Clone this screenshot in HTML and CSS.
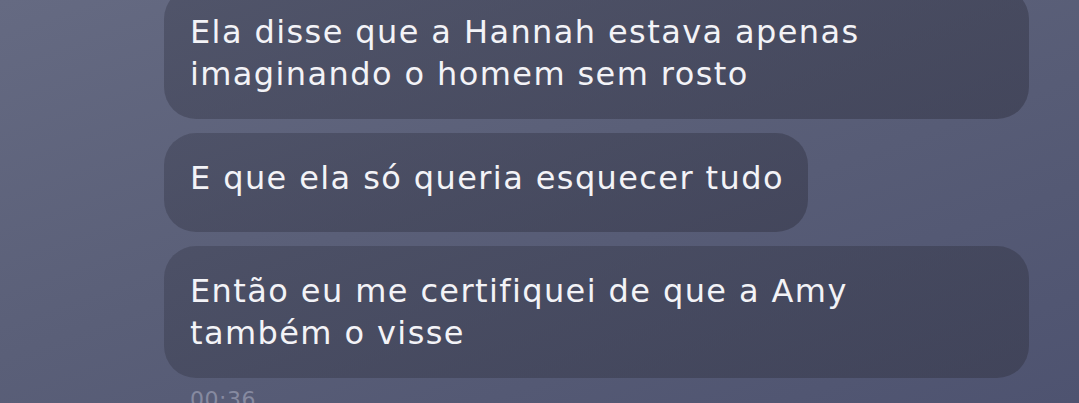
FILE: index.html
```html
<!DOCTYPE html>
<html lang="en">
<head>
  <meta charset="UTF-8">
  <title>Chat</title>
  <link rel="stylesheet" href="styles.css">
</head>
<body>
  <div class="chat">
    <div class="bubble">Ela disse que a Hannah estava apenas imaginando o homem sem rosto</div>
    <div class="bubble bubble-short">E que ela só queria esquecer tudo</div>
    <div class="bubble">Então eu me certifiquei de que a Amy também o visse</div>
    <div class="time">00:36</div>
  </div>
</body>
</html>
```

FILE: styles.css
```css
html, body {
  height: 100%;
}

body {
  margin: 0;
  overflow: hidden;
  font-family: 'DejaVu Sans', 'Open Sans', sans-serif;
  background: linear-gradient(160deg, #656a82 0%, #5a5f78 45%, #4e5370 100%);
  color: #f3f3f7;
}

.chat {
  display: flex;
  flex-direction: column;
  align-items: flex-start;
  gap: 14px;
  padding-left: 164px;
  margin-top: -13px;
}

.bubble {
  box-sizing: border-box;
  max-width: 865px;
  padding: 24px 36px 24px 26px;
  border-radius: 32px;
  background: linear-gradient(160deg, rgba(62, 65, 84, 0.5), rgba(56, 58, 76, 0.62));
  font-size: 32px;
  line-height: 42px;
  letter-spacing: 1.4px;
}

.bubble-short {
  min-height: 99px;
  padding-right: 24px;
}

.time {
  margin-top: -5px;
  padding-left: 26px;
  font-size: 22px;
  letter-spacing: 0.5px;
  color: #868aa0;
}
```
